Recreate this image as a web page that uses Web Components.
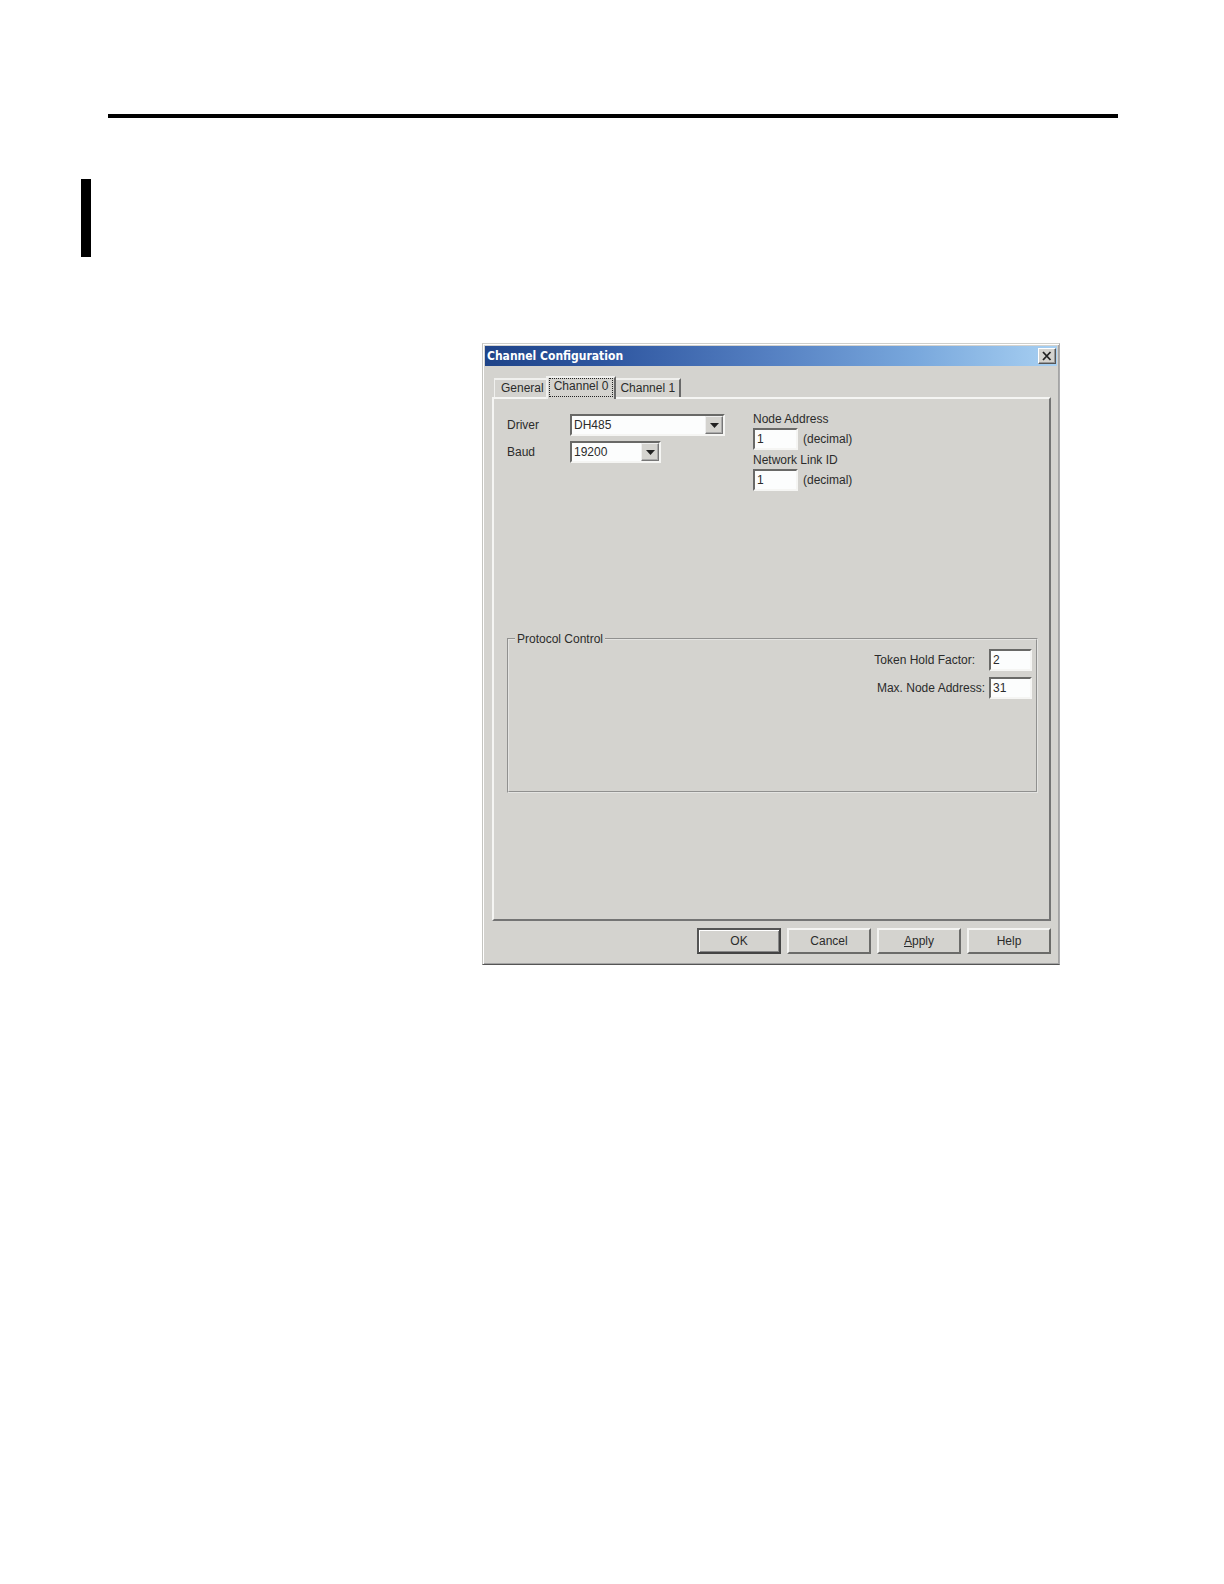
<!DOCTYPE html>
<html lang="en">
<head>
<meta charset="utf-8">
<title>Channel Configuration</title>
<style>
  body { margin: 0; background: #fff; color: #2b2b2b; font: 12px/16px "Liberation Sans", Arial, sans-serif; }
</style>
</head>
<body>
<manual-page>
  <dialog-window heading="Channel Configuration">
    <tab-pages>
      <tab-button slot="tabs" label="General"></tab-button>
      <tab-button slot="tabs" label="Channel 0" active></tab-button>
      <tab-button slot="tabs" label="Channel 1"></tab-button>
      <channel-settings></channel-settings>
      <group-box label="Protocol Control">
        <number-row label="Token Hold Factor:" value="2" spaced></number-row>
        <number-row label="Max. Node Address:" value="31"></number-row>
      </group-box>
    </tab-pages>
    <push-button slot="actions" primary>OK</push-button>
    <push-button slot="actions">Cancel</push-button>
    <push-button slot="actions"><u>A</u>pply</push-button>
    <push-button slot="actions">Help</push-button>
  </dialog-window>
</manual-page>
<script>
const base = `*, *::before, *::after { box-sizing: border-box; }
  input, select, button { font: inherit; color: inherit; border-radius: 0; margin: 0; outline: 0; }
  .sunken { border: 2px solid; border-color: #696967 #f5f5f3 #f5f5f3 #696967; background: #fcfdfd; }`;
const define = (name, view) => customElements.define(name, class extends HTMLElement {
  connectedCallback() {
    if (this.shadowRoot) return;
    this.attachShadow({ mode: 'open' }).innerHTML = `<style>${base}</style>` + view(this);
  }
});

define('manual-page', () => `<style>
  :host { display: block; padding-top: 114px; }
  hr { margin: 0 106px 0 108px; border: 0; height: 4px; background: #000; }
  .change { width: 10px; height: 78px; margin: 61px 0 0 81px; background: #000; }
  main { margin: 86px 164px 0 482px; padding-bottom: 120px; }
</style><hr><div class="change"></div><main><slot></slot></main>`);

define('dialog-window', el => `<style>
  :host { display: block; }
  section { background: #d4d3cf; border: 1px solid; border-color: #cfcfcb #aeaeb0 #555 #c4c4c0;
    box-shadow: inset 1px 1px #fff, inset -1px -1px #a4a4a4; padding: 2px 2px 10px; }
  header { display: flex; align-items: center; height: 20px; padding: 0 1px 0 2px; color: #fff;
    background: linear-gradient(90deg, #1f4489, #2d559f 20%, #5580c2 50%, #78a7dc 75%, #a8d0f2); }
  h1 { flex: 1; margin: 0; font: bold 12px/20px "DejaVu Sans Condensed", sans-serif; }
  header button { width: 18px; height: 16px; padding: 0; display: grid; place-items: center;
    background: #d4d3cf; border: 1px solid; border-color: #fff #555 #555 #fff; box-shadow: inset -1px -1px #999; }
  svg { display: block; }
  .body { padding: 10px 6px 0 7px; }
  footer { display: flex; justify-content: flex-end; gap: 6px; margin: 7px 6px 0; }
</style><section><header><h1>${el.getAttribute('heading')}</h1>
  <button aria-label="Close"><svg width="10" height="10" viewBox="0 0 10 10"><path d="M1 1l7.500 8M8.500 1L1 9" stroke="#222" stroke-width="1.800" fill="none"/></svg></button>
  </header><div class="body"><slot></slot></div><footer><slot name="actions"></slot></footer></section>`);

define('tab-pages', () => `<style>
  :host { display: block; }
  nav { display: flex; align-items: flex-end; padding-left: 2px; height: 21px; }
  .panel { min-height: 524px; padding: 15px 11px 0 13px; border: 2px solid;
    border-color: #f5f5f3 #747474 #747474 #f5f5f3; }
  ::slotted(group-box) { margin-top: 138px; }
</style><nav><slot name="tabs"></slot></nav><div class="panel"><slot></slot></div>`);

define('tab-button', el => `<style>
  :host { display: block; }
  button { display: block; height: 19px; padding: 0 2px 0 6px; line-height: 17px; background: #d4d3cf;
    border: 0; border-top: 2px solid #f0f0ee; border-left: 1px solid #f0f0ee; white-space: nowrap; }
  :host([active]) { position: relative; }
  :host([active]) button { height: 23px; margin-bottom: -2px; padding: 0 1px 2px; border-left-width: 2px; border-right: 2px solid #696969; }
  :host([active]) span { display: block; border: 1px dotted #222; height: 19px; padding: 0 4px; line-height: 15px; }
  :host(:nth-of-type(3)) button { border-left: 0; padding: 0 4px; border-right: 2px solid #696969; }
</style><button role="tab"><span>${el.getAttribute('label')}</span></button>`);

const picker = (id, label, value, cls) => `<label for="${id}">${label}</label>
  <div class="pick sunken ${cls}"><select id="${id}"><option>${value}</option></select>
  <i><svg width="9" height="5" viewBox="0 0 9 5"><path d="M0 0h9L4.500 5z" fill="#222"/></svg></i></div>`;
const address = (id, label) => `<label for="${id}">${label}</label>
  <div class="entry"><input class="sunken" id="${id}" value="1"><span>(decimal)</span></div>`;
define('channel-settings', () => `<style>
  :host { display: flex; }
  .line { display: grid; grid-template-columns: 63px 155px; row-gap: 5px; align-content: start; align-items: center; margin-right: 28px; }
  .pick { display: grid; height: 22px; grid-template: 1fr / 1fr 18px; }
  .short { width: 91px; }
  select { appearance: none; grid-area: 1 / 1 / 2 / 3; border: 0; background: none; padding: 0 2px; min-width: 0; line-height: 18px; }
  i { grid-area: 1 / 2; display: grid; place-items: center; pointer-events: none; background: #d4d3cf;
    border: 1px solid; border-color: #eee #777 #777 #eee; box-shadow: inset -1px -1px #aaa; }
  svg { display: block; }
  .address { margin-top: -3px; }
  .address label { display: block; height: 17px; }
  .entry { display: flex; align-items: center; gap: 5px; margin-bottom: 2px; }
  .entry input { width: 45px; height: 22px; padding: 0 2px; }
</style><div class="line">${picker('driver', 'Driver', 'DH485', '')}${picker('baud', 'Baud', '19200', 'short')}</div>
  <div class="address">${address('node', 'Node Address')}${address('link', 'Network Link ID')}</div>`);

define('group-box', el => `<style>
  :host { display: block; }
  fieldset { margin: 0; min-width: 0; min-height: 162px; padding: 2px 4px 0; border: 2px groove #e4e4e2; }
  legend { margin-left: 2px; padding: 0 2px; }
  .rows { display: grid; gap: 6px; }
</style><fieldset><legend>${el.getAttribute('label')}</legend><div class="rows"><slot></slot></div></fieldset>`);

define('number-row', el => `<style>
  :host { display: flex; justify-content: flex-end; align-items: center; }
  label { padding-right: 4px; }
  :host([spaced]) label { padding-right: 14px; }
  input { width: 43px; height: 22px; padding: 0 2px; }
</style><label for="value">${el.getAttribute('label')}</label><input class="sunken" id="value" value="${el.getAttribute('value')}">`);

define('push-button', () => `<style>
  :host { display: block; }
  button { display: block; width: 84px; height: 26px; padding: 0; background: #d4d3cf; border: 2px solid;
    border-color: #f4f4f2 #6b6b69 #6b6b69 #f4f4f2; }
  :host([primary]) button { border-color: #555 #444 #444 #555; box-shadow: inset 1px 1px #fff, inset -1px -1px #888; }
</style><button><slot></slot></button>`);
</script>
</body>
</html>
